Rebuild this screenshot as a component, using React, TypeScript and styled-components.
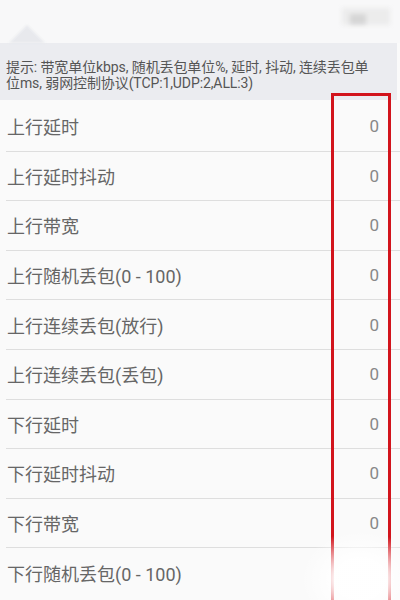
import React from "react";
import styled, { createGlobalStyle } from "styled-components";

const GlobalStyle = createGlobalStyle`
  html, body {
    margin: 0;
    padding: 0;
    background: #fafafa;
  }
`;

const Page = styled.div`
  position: relative;
  width: 400px;
  height: 600px;
  overflow: hidden;
  background: #fafafa;
  font-family: "Roboto", "Noto Sans CJK SC", sans-serif;
`;

const TopBar = styled.div`
  position: relative;
  height: 43px;
  background: #f8f8f9;
`;

const Pointer = styled.div`
  position: absolute;
  left: 9px;
  bottom: 0;
  width: 0;
  height: 0;
  border-left: 18px solid transparent;
  border-right: 18px solid transparent;
  border-bottom: 18px solid #e8e9ed;
  filter: blur(1px);
`;

const Watermark = styled.div`
  position: absolute;
  right: 10px;
  top: 8px;
  width: 48px;
  height: 17px;
  background: #ececec;
  filter: blur(2px);

  &::after {
    content: "";
    position: absolute;
    left: 8px;
    top: 6px;
    width: 16px;
    height: 11px;
    background: #d6d6d6;
  }
`;

const Hint = styled.div`
  margin-right: 3px;
  padding: 16px 20px 9px 6px;
  background: #ebecf0;
  color: #555;
  font-size: 14px;
  line-height: 16px;
  letter-spacing: -0.1px;
`;

const List = styled.div`
  display: flex;
  flex-direction: column;
  padding-top: 2px;
`;

const Row = styled.div<{ $last?: boolean }>`
  display: flex;
  align-items: center;
  justify-content: space-between;
  height: 49.6px;
  box-sizing: border-box;
  margin-left: 6px;
  padding: 0 21px 0 1px;
  border-bottom: ${(p) => (p.$last ? "none" : "1px solid #dedede")};
`;

const Label = styled.span`
  color: #666;
  font-size: 18px;
`;

const Value = styled.span`
  color: #888;
  font-size: 17px;
`;

const Highlight = styled.div`
  position: absolute;
  left: 331px;
  top: 93px;
  width: 60px;
  height: 530px;
  box-sizing: border-box;
  border: 3px solid #d2141c;
`;

const Fade = styled.div`
  position: absolute;
  right: 0;
  bottom: 0;
  width: 100px;
  height: 70px;
  background: radial-gradient(ellipse at 60% 70%, rgba(255,255,255,0.95) 30%, rgba(255,255,255,0) 70%);
`;

const rows = [
  "上行延时",
  "上行延时抖动",
  "上行带宽",
  "上行随机丢包(0 - 100)",
  "上行连续丢包(放行)",
  "上行连续丢包(丢包)",
  "下行延时",
  "下行延时抖动",
  "下行带宽",
  "下行随机丢包(0 - 100)",
];

export default function App() {
  return (
    <Page>
      <GlobalStyle />
      <TopBar>
        <Pointer />
        <Watermark />
      </TopBar>
      <Hint>
        提示: 带宽单位kbps, 随机丢包单位%, 延时, 抖动, 连续丢包单位ms, 弱网控制协议(TCP:1,UDP:2,ALL:3)
      </Hint>
      <List>
        {rows.map((r, i) => (
          <Row key={r} $last={i === rows.length - 1}>
            <Label>{r}</Label>
            <Value>{i === rows.length - 1 ? "" : "0"}</Value>
          </Row>
        ))}
      </List>
      <Highlight />
      <Fade />
    </Page>
  );
}
